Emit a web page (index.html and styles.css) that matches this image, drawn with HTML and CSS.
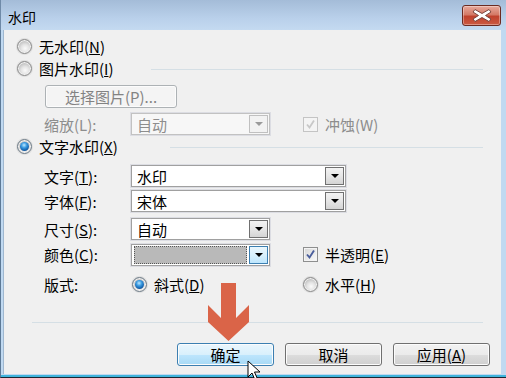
FILE: index.html
```html
<!DOCTYPE html>
<html lang="zh-CN">
<head>
  <meta charset="UTF-8">
  <title>水印</title>
  <link rel="stylesheet" href="styles.css">
</head>
<body>
  <div class="window">
    <div class="titlebar">
      <span class="title">水印</span>
      <div class="close-btn">
        <svg width="20" height="15" viewBox="0 0 20 15">
          <path d="M3 1.5 L10 5.5 L17 1.5 L19 4 L13.5 7.5 L19 11 L17 13.5 L10 9.5 L3 13.5 L1 11 L6.5 7.5 L1 4 Z" fill="#fff" stroke="#6e3b33" stroke-width="0.9" stroke-linejoin="round"/>
        </svg>
      </div>
    </div>

    <div class="frame">
      <div class="content">
        <div class="radio-row first">
          <span class="radio"></span>
          <span>无水印(<u>N</u>)</span>
        </div>

        <div class="radio-row gap5">
          <span class="radio"></span>
          <span>图片水印(<u>I</u>)</span>
          <span class="sep sep-pic"></span>
        </div>

        <div class="pick-row">
          <div class="btn disabled">选择图片(P)...</div>
        </div>

        <div class="field-row scale-row">
          <span class="label disabled-text">缩放(L):</span>
          <div class="slot">
            <div class="combo short disabled">
              <span class="value">自动</span>
              <span class="drop"><i></i></span>
            </div>
          </div>
          <span class="check disabled"><svg width="11" height="11" viewBox="0 0 11 11"><path d="M2 5.5 L4.5 8.5 L9 1.5" fill="none" stroke="#c8c8c8" stroke-width="1.8"/></svg></span>
          <span class="disabled-text">冲蚀(W)</span>
        </div>

        <div class="radio-row text-mark">
          <span class="radio on"></span>
          <span>文字水印(<u>X</u>)</span>
          <span class="sep sep-text"></span>
        </div>

        <div class="field-row text-row">
          <span class="label">文字(<u>T</u>):</span>
          <div class="combo long">
            <span class="value">水印</span>
            <span class="drop"><i></i></span>
          </div>
        </div>

        <div class="field-row font-row">
          <span class="label">字体(<u>F</u>):</span>
          <div class="combo long">
            <span class="value">宋体</span>
            <span class="drop"><i></i></span>
          </div>
        </div>

        <div class="field-row size-row">
          <span class="label">尺寸(<u>S</u>):</span>
          <div class="combo short">
            <span class="value">自动</span>
            <span class="drop"><i></i></span>
          </div>
        </div>

        <div class="field-row color-row">
          <span class="label">颜色(<u>C</u>):</span>
          <div class="slot">
            <div class="combo short color">
              <span class="swatch"></span>
              <span class="drop hot"><i></i></span>
            </div>
          </div>
          <span class="check"><svg width="11" height="11" viewBox="0 0 11 11"><path d="M2 5.5 L4.5 8.5 L9 1.5" fill="none" stroke="#4a5e9c" stroke-width="1.9"/></svg></span>
          <span>半透明(<u>E</u>)</span>
        </div>

        <div class="field-row layout-row">
          <span class="label">版式:</span>
          <div class="slot">
            <span class="radio on"></span>
            <span>斜式(<u>D</u>)</span>
          </div>
          <span class="radio"></span>
          <span class="opt">水平(<u>H</u>)</span>
        </div>

        <div class="sep sep-bottom"></div>

        <div class="buttons">
          <div class="btn hot">确定</div>
          <div class="btn">取消</div>
          <div class="btn">应用(<u>A</u>)</div>
        </div>
      </div>
    </div>

    <svg class="pointer-arrow" width="44" height="60" viewBox="0 0 44 60">
      <polygon points="13,0 28,0 28,35 41,22 41,39 20.5,58 0,39 0,22 13,35" fill="#da6448"/>
    </svg>

    <svg class="cursor" width="16" height="22" viewBox="0 0 16 22">
      <path d="M1 1 L1 17 L5 13 L8 20 L10.5 19 L7.5 12 L13 12 Z" fill="#fff" stroke="#000" stroke-width="1"/>
    </svg>
  </div>
</body>
</html>
```

FILE: styles.css
```css
body {
  margin: 0;
  width: 506px;
  height: 378px;
  overflow: hidden;
  font-family: "Noto Sans CJK SC", sans-serif;
  font-size: 15px;
  line-height: 17px;
  color: #000;
}

.window {
  position: relative;
  width: 506px;
  height: 378px;
  display: flex;
  flex-direction: column;
  background: #bdd5ee;
}

.titlebar {
  height: 30px;
  flex: none;
  display: flex;
  align-items: center;
  justify-content: space-between;
  padding: 0 5px 0 7px;
  background: linear-gradient(#a4bcd8, #b9d0ea 60%, #c4daf0);
  border-left: 1px solid #6f8aa8;
}

.title {
  font-size: 14px;
  margin-top: 5px;
}

.close-btn {
  width: 37px;
  height: 19px;
  margin-top: 1px;
  border: 1px solid #6b2b22;
  border-radius: 3px;
  background: linear-gradient(#e8a99c, #d47a67 45%, #c0422d 55%, #cb5a42);
  display: flex;
  align-items: center;
  justify-content: center;
  box-shadow: inset 0 0 0 1px rgba(255, 255, 255, 0.35);
}

.frame {
  flex: 1;
  display: flex;
  border-left: 1px solid #5d7996;
  padding: 0 5px 3px 2px;
  background: #c0d9f1;
  border-bottom: 1px solid #1c2733;
  box-shadow: inset 0 -2px 0 #3fb4dc;
}

.content {
  flex: 1;
  background: #f0f0f0;
  display: flex;
  flex-direction: column;
  padding-top: 8px;
  box-shadow: inset 1px 0 0 #9fb7cf;
}

/* rows */

.radio-row {
  height: 17px;
  display: flex;
  align-items: center;
  padding-left: 14px;
}

.radio-row .radio {
  margin-right: 7px;
}

.gap5 { margin-top: 5px; }
.text-mark { margin-top: 3px; }

.sep {
  height: 1px;
  background: #d5dfe5;
}

.sep-pic {
  flex: 1;
  margin: 2px 18px 0 37px;
}

.sep-text {
  flex: 1;
  margin: 2px 18px 0 52px;
}

.sep-bottom {
  margin: 29px 18px 0 29px;
}

.pick-row {
  margin-top: 8px;
  padding-left: 42px;
}

.field-row {
  display: flex;
  align-items: center;
  padding-left: 41px;
  height: 22px;
}

.scale-row { margin-top: 5px; }
.text-row { margin-top: 10px; }
.font-row { margin-top: 3px; }
.size-row { margin-top: 6px; }
.color-row { margin-top: 3px; height: 23px; }
.layout-row { margin-top: 10px; height: 17px; }

.label {
  width: 87px;
  flex: none;
}

.slot {
  width: 172px;
  flex: none;
  display: flex;
  align-items: center;
}

.layout-row .slot .radio {
  margin: 0 7px 0 1px;
}

.layout-row .opt {
  margin-left: 7px;
}

.disabled-text {
  color: #8d8d8d;
}

/* controls */

.radio {
  width: 13px;
  height: 13px;
  flex: none;
  border-radius: 50%;
  border: 1px solid #8a8a8a;
  background: radial-gradient(circle at 55% 65%, #fafafa 0, #e4e4e4 35%, #b9b9b9 75%, #a4a4a4 100%);
  box-shadow: 0 0 0 1px #dedede, inset 0 0 0 1px #f2f2f2;
  position: relative;
}

.radio.on {
  border-color: #6c7a86;
}

.radio.on::after {
  content: "";
  position: absolute;
  left: 2px;
  top: 2px;
  width: 9px;
  height: 9px;
  border-radius: 50%;
  background: radial-gradient(circle at 45% 35%, #bfe8ff 0, #3a9ae0 35%, #1664b0 65%, #0a2f5c 100%);
}

.check {
  width: 13px;
  height: 13px;
  flex: none;
  border: 1px solid #8e8f8f;
  background: linear-gradient(135deg, #d6d6d6, #fbfbfb);
  box-shadow: inset 0 0 0 1px #f4f4f4;
  display: flex;
  align-items: center;
  justify-content: center;
  margin-right: 7px;
}

.check.disabled {
  border-color: #c4c4c4;
  background: #f4f4f4;
}

.combo {
  box-sizing: border-box;
  border: 1px solid #a0a0a0;
  box-shadow: 0 0 0 1px #dcdde3;
  background: #fff;
  display: flex;
  align-items: center;
  justify-content: space-between;
  padding: 0 1px 0 5px;
  height: 22px;
}

.combo.long { width: 215px; }
.combo.short { width: 139px; }

.combo.disabled {
  background: #f7f7f7;
  border-color: #c2c2c2;
  color: #8d8d8d;
}

.drop {
  width: 19px;
  height: 18px;
  box-sizing: border-box;
  border: 1px solid #707070;
  background: linear-gradient(#f3f3f3, #e6e6e6 50%, #d4d4d4);
  display: flex;
  align-items: center;
  justify-content: center;
}

.drop i {
  width: 0;
  height: 0;
  border-left: 4px solid transparent;
  border-right: 4px solid transparent;
  border-top: 4px solid #000;
}

.combo.disabled .drop {
  border-color: #c0c0c0;
  background: #f2f2f2;
}

.combo.disabled .drop i {
  border-top-color: #9a9a9a;
}

.drop.hot {
  border-color: #3c7fb1;
  background: linear-gradient(#eaf6fd, #d9f0fc 50%, #bee6fd);
}

.combo.color {
  padding-left: 2px;
}

.swatch {
  flex: 1;
  height: 16px;
  margin-right: 2px;
  background: #b9b9b9;
  outline: 1px dotted #555;
  outline-offset: -1px;
  border: 1px solid #c8c8c8;
}

/* buttons */

.buttons {
  margin-top: 20px;
  display: flex;
  justify-content: flex-end;
  gap: 11px;
  padding-right: 11px;
}

.btn {
  width: 95px;
  height: 21px;
  border: 1px solid #707070;
  border-radius: 3px;
  background: linear-gradient(#f2f2f2, #ebebeb 50%, #dddddd 51%, #cfcfcf);
  box-shadow: inset 0 0 0 1px #fcfcfc;
  display: flex;
  align-items: center;
  justify-content: center;
}

.btn.hot {
  border-color: #3c7fb1;
  background: linear-gradient(#eaf6fd, #d9f0fc 50%, #bee6fd 51%, #a7d9f5);
}

.pick-row .btn {
  width: 130px;
}

.btn.disabled {
  border-color: #adb2b5;
  background: #f4f4f4;
  color: #838383;
}

/* overlays */

.pointer-arrow {
  position: absolute;
  left: 208px;
  top: 283px;
}

.cursor {
  position: absolute;
  left: 247px;
  top: 360px;
}
```
